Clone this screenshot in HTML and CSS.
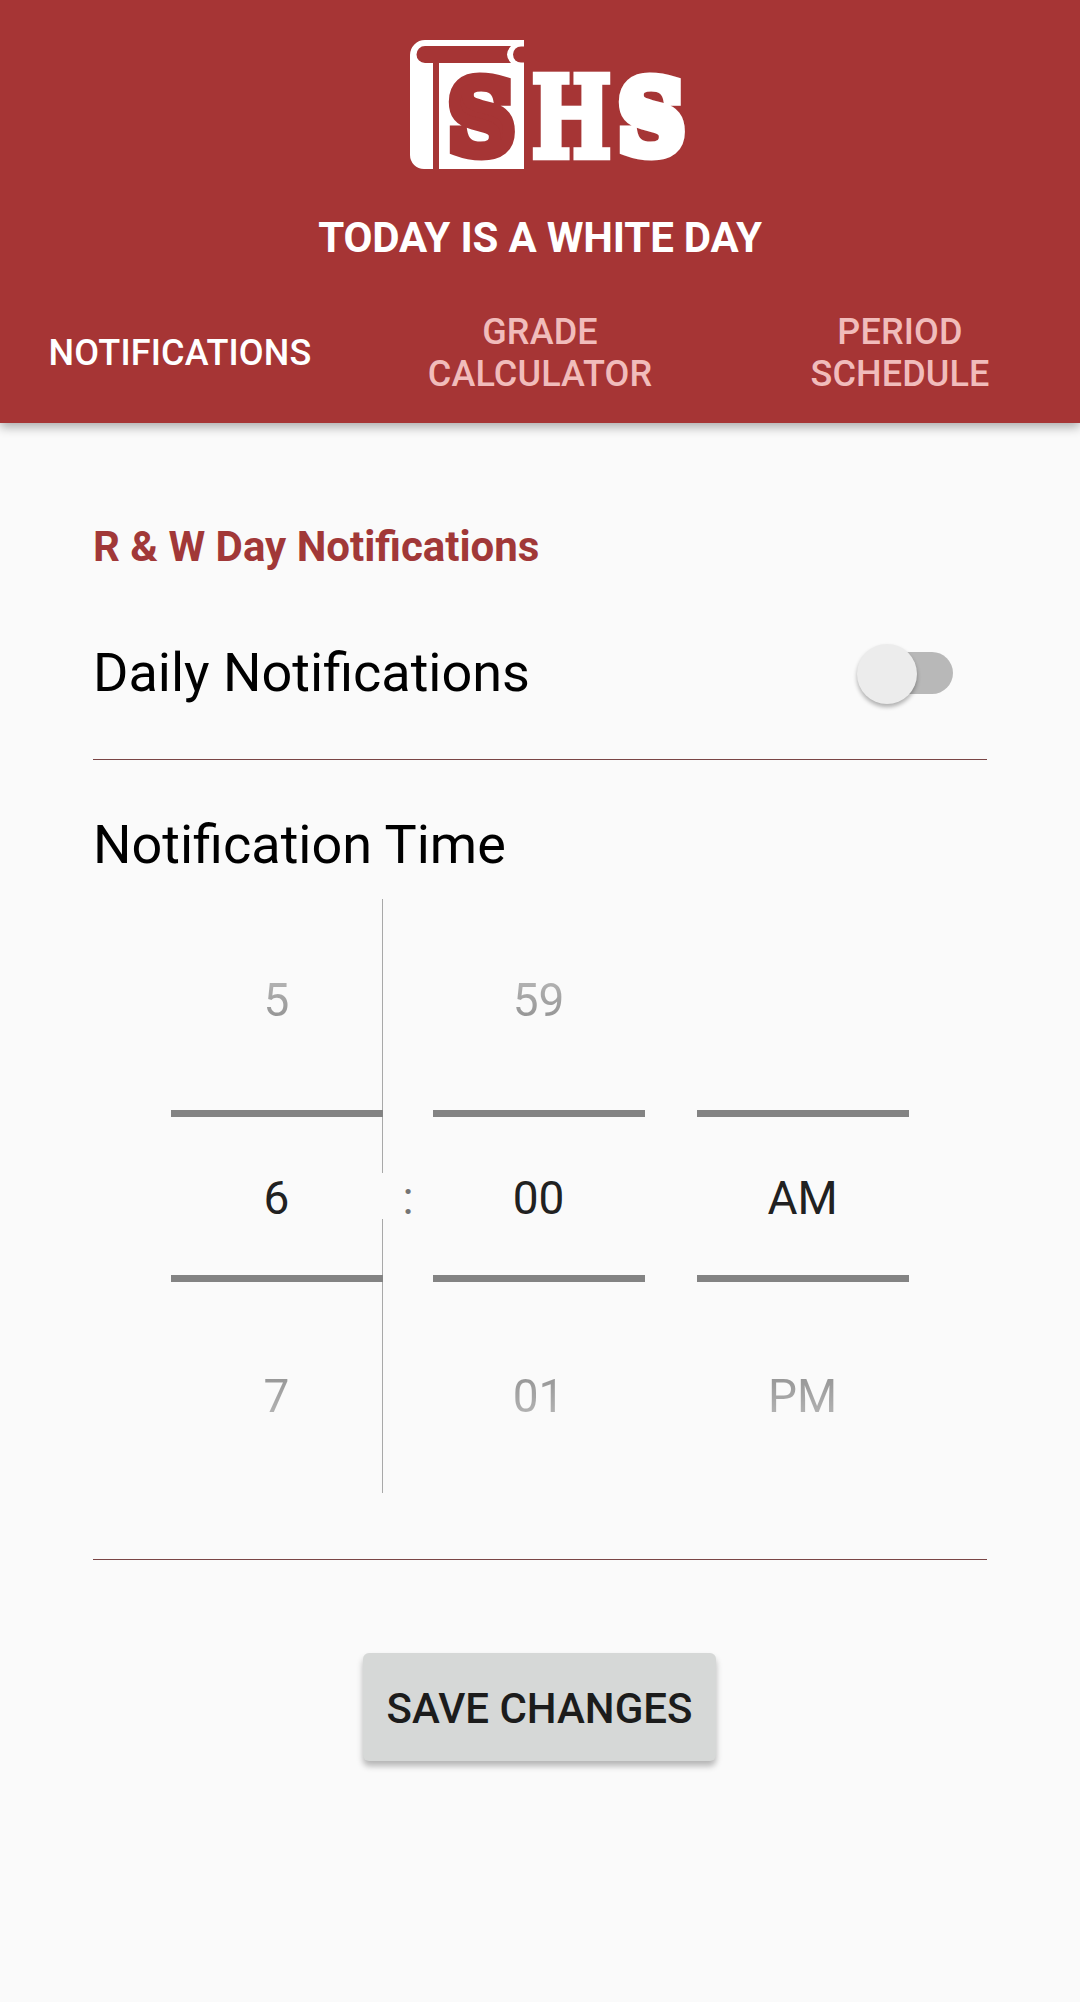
FILE: index.html
```html
<!DOCTYPE html>
<html lang="en">
<head>
<meta charset="utf-8">
<title>SHS Notifications</title>
<link rel="stylesheet" href="styles.css">
</head>
<body>
<header class="header">
  <svg class="logo" viewBox="0 0 300 150" role="img" aria-label="SHS">
    <path class="light" d="M124 10H25A15 15 0 0 0 10 25V125A14 14 0 0 0 24 139H33V33H39V139H124Z"/>
    <path class="dark" d="M25 16H111Q103 24.5 111 33H25A8.5 8.5 0 0 1 25 16Z"/>
    <path class="dark" d="M124 16.5H121A8 8 0 0 0 121 32.5H124Z"/>
    <g class="logo-letters">
      <text class="dark" transform="translate(81.5 122.5) scale(.85 .935)" text-anchor="middle">S</text>
      <text class="light letter-h" transform="translate(171.5 126.8) scale(.795 1.045)" text-anchor="middle">H</text>
      <text class="light" transform="translate(251.5 122.5) scale(.85 .935)" text-anchor="middle">S</text>
    </g>
  </svg>
  <h1 class="day">TODAY IS A WHITE DAY</h1>
  <nav class="tabs">
    <a class="tab tab-active">NOTIFICATIONS</a>
    <a class="tab">GRADE<br>CALCULATOR</a>
    <a class="tab">PERIOD<br>SCHEDULE</a>
  </nav>
</header>
<main class="content">
  <h2 class="section-title">R &amp; W Day Notifications</h2>
  <div class="setting">
    <span class="label">Daily Notifications</span>
    <span class="switch" role="switch" aria-checked="false"><span class="thumb"></span></span>
  </div>
  <hr class="divider">
  <div class="label time-label">Notification Time</div>
  <div class="picker">
    <div class="wheel wheel-hour">
      <span class="prev">5</span><span class="current">6</span><span class="next">7</span>
    </div>
    <span class="colon">:</span>
    <div class="wheel">
      <span class="prev">59</span><span class="current">00</span><span class="next">01</span>
    </div>
    <div class="wheel wheel-period">
      <span class="prev"></span><span class="current">AM</span><span class="next">PM</span>
    </div>
  </div>
  <hr class="divider">
  <button class="save">SAVE CHANGES</button>
</main>
</body>
</html>
```
FILE: styles.css
```css
*, *::before, *::after { box-sizing: border-box; }

body {
  margin: 0;
  min-height: 2002px;
  background: #fafafa;
  color: #000;
  font-family: Roboto, sans-serif;
}

.header {
  display: flex;
  flex-direction: column;
  align-items: center;
  height: 423px;
  padding-top: 30px;
  background: #a63535;
  color: #fff;
  box-shadow: 0 4px 10px rgba(0, 0, 0, .32);
}

.logo { display: block; width: 300px; height: 150px; margin-left: 20px; }
.light { fill: #fff; stroke: none; }
.dark { fill: #a63535; stroke: none; }
.logo-letters {
  font: bold 107px "DejaVu Serif", serif;
}
.logo-letters text { stroke-width: 14px; stroke-linejoin: miter; stroke-miterlimit: 2; }
.logo-letters .letter-h { stroke-width: 6px; }
.logo-letters .light { stroke: #fff; }
.logo-letters .dark { stroke: #a63535; }

.day {
  margin: 33px 0 20px;
  font-size: 42px;
  line-height: 50px;
  font-weight: 700;
  letter-spacing: -.18px;
}

.tabs {
  display: grid;
  grid-template-columns: repeat(3, 1fr);
  align-items: center;
  width: 100%;
  height: 140px;
}
.tab {
  font-size: 36px;
  line-height: 42px;
  font-weight: 500;
  letter-spacing: .13px;
  text-align: center;
  color: #f1bcbb;
}
.tab-active { color: #fff; }

.content {
  display: flex;
  flex-direction: column;
  padding: 99px 93px 0;
}
.section-title {
  margin: 0;
  font-size: 42px;
  line-height: 50px;
  font-weight: 700;
  color: #a13838;
}
.setting {
  display: flex;
  justify-content: space-between;
  align-items: center;
  margin: 69px 34px 54px 0;
}
.label { font-size: 54px; line-height: 64px; }

.switch {
  display: flex;
  align-items: center;
  width: 90px;
  height: 42px;
  margin-left: auto;
  border-radius: 21px;
  background: #b8b8b8;
}
.thumb {
  flex: none;
  width: 60px;
  height: 60px;
  margin: 1px 0 0 -6px;
  border-radius: 50%;
  background: #ececec;
  box-shadow: 0 3px 4px rgba(0, 0, 0, .3);
}

.divider {
  width: 100%;
  height: 1px;
  margin: 0;
  border: 0;
  background: #7a4545;
}
.time-label { margin: 53px 0 22px; }

.picker {
  display: flex;
  align-items: center;
  height: 594px;
  margin: 0 78px 66px;
  font-size: 46px;
  line-height: 54px;
}
.wheel {
  position: relative;
  display: grid;
  grid-template-rows: repeat(3, 198px);
  width: 212px;
  text-align: center;
}
.wheel span { padding: 74px 1px 0 0; }
.wheel-period { margin-left: 52px; }
.wheel .current { color: #212121; }
.wheel .prev,
.wheel .next {
  color: transparent;
  background-clip: text;
  -webkit-background-clip: text;
}
.wheel .prev { background-image: linear-gradient(#fafafa, #b2b2b2 42%, #929292 62%, #707070); }
.wheel .next { background-image: linear-gradient(#707070, #929292 38%, #b2b2b2 60%, #fafafa); }

/* selection bars above and below the current value */
.wheel::before {
  content: "";
  position: absolute;
  top: 211px;
  left: 0;
  width: 100%;
  height: 172px;
  border: solid #838383;
  border-width: 7px 0;
}
/* hairline to the right of the hour wheel, broken beside the colon */
.wheel-hour::after {
  content: "";
  position: absolute;
  top: 0;
  right: 0;
  width: 1px;
  height: 100%;
  background: linear-gradient(#a8a8a8 0 274px, transparent 274px 320px, #a8a8a8 320px);
}
.wheel-hour::before { z-index: 1; }
.colon { width: 50px; padding-top: 4px; text-align: center; color: #757575; }

.save {
  align-self: center;
  width: 353px;
  height: 108px;
  margin: 93px 1px 0 0;
  padding: 4px 0 0;
  border: 0;
  border-radius: 6px;
  background: #d6d8d7;
  box-shadow: 0 5px 6px rgba(0, 0, 0, .28);
  color: #1c1c1c;
  font: 500 42px/50px Roboto, sans-serif;
}
```
